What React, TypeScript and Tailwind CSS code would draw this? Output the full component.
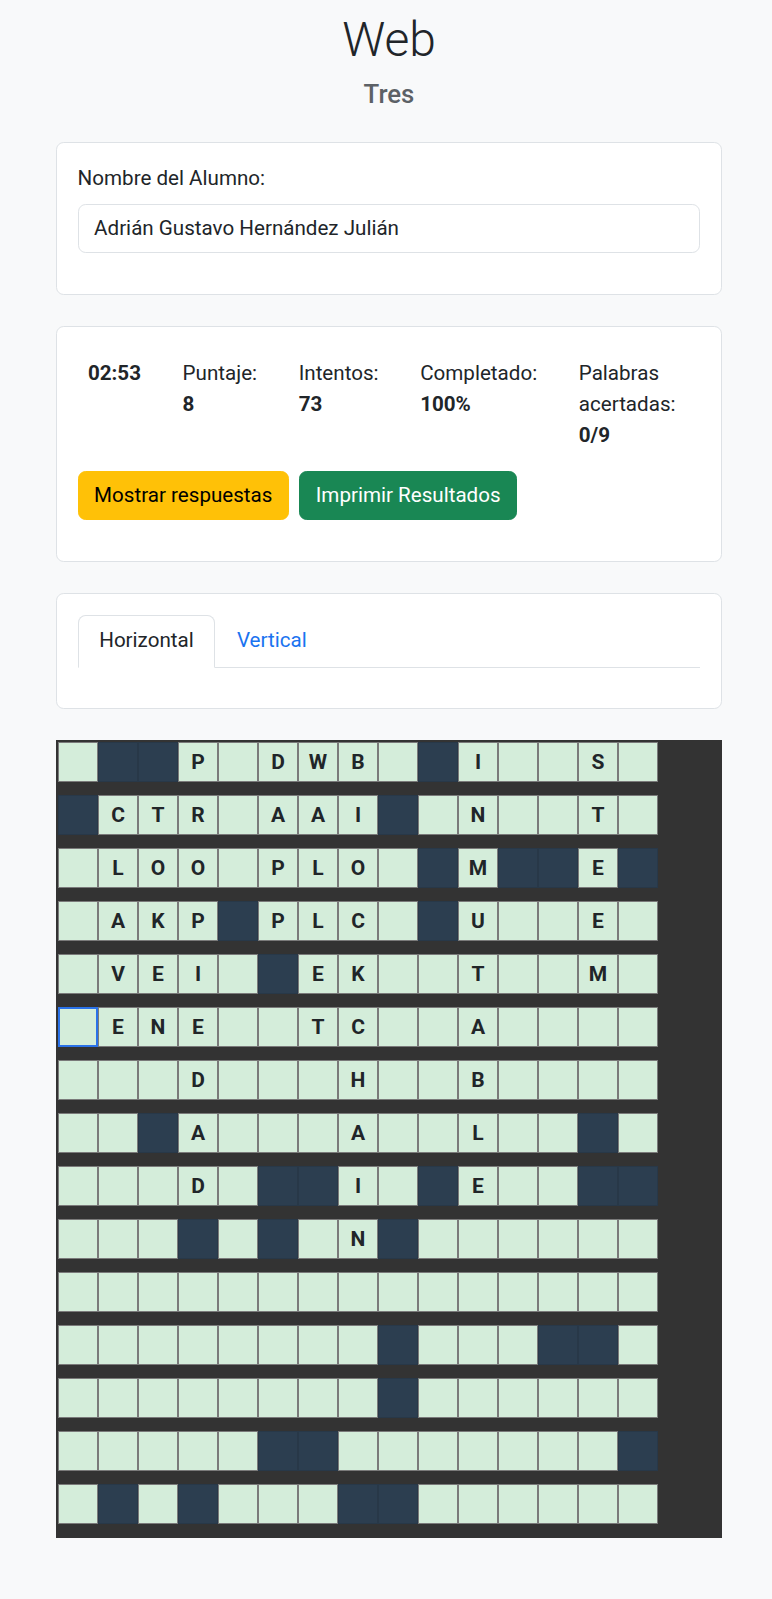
import React from "react";

// crossword layout: "." empty cell, "#" blocked, "*" focused cell, letters are filled in
const grid = [
  ".##P.DWB.#I..S.",
  "#CTR.AAI#.N..T.",
  ".LOO.PLO.#M##E#",
  ".AKP#PLC.#U..E.",
  ".VEI.#EK..T..M.",
  "*ENE..TC..A....",
  "...D...H..B....",
  "..#A...A..L..#.",
  "...D.##I.#E..##",
  "...#.#.N#......",
  "...............",
  "........#...##.",
  "........#......",
  ".....##.......#",
  ".#.#...##......",
];

const stats = [
  { label: "Puntaje:", value: "8" },
  { label: "Intentos:", value: "73" },
  { label: "Completado:", value: "100%" },
];

function Cell({ ch }: { ch: string }) {
  if (ch === "#") {
    return <div className="w-[40px] h-[40px] bg-[#2c3e50] border border-[#283848]" />;
  }
  if (ch === "*") {
    return <div className="w-[40px] h-[40px] bg-[#d4edda] border-2 border-[#2a72e8]" />;
  }
  return (
    <div className="w-[40px] h-[40px] bg-[#d4edda] border border-[#7a7a7a] flex items-center justify-center text-[21px] font-bold text-[#212529]">
      {ch === "." ? "" : ch}
    </div>
  );
}

export default function App() {
  return (
    <div className="min-h-screen bg-[#f8f9fa] font-['Roboto',sans-serif] text-[#212529] text-[20.6px] leading-[1.5]">
      <div className="pl-[56px] pr-[50px] pt-[11px] pb-[40px]">
        <h1 className="text-center text-[48px] font-light leading-[1.2] mb-[10px]">Web</h1>
        <h5 className="text-center text-[25.8px] font-medium leading-[1.2] text-[#5c6166] mb-[32px]">Tres</h5>

        {/* student name */}
        <div className="bg-white border border-[#dee2e6] rounded-[7.7px] p-[20.6px] mb-[31px]">
          <label className="block mb-[10.3px]">Nombre del Alumno:</label>
          <div className="h-[49px] border border-[#dee2e6] rounded-[7.7px] px-[15.5px] flex items-center mb-[20px]">
            Adrián Gustavo Hernández Julián
          </div>
        </div>

        {/* stats */}
        <div className="bg-white border border-[#dee2e6] rounded-[7.7px] p-[20.6px] mb-[31px]">
          <div className="flex gap-[21px] mb-[10.3px]">
            <div className="p-[10.3px] font-bold">02:53</div>
            {stats.map((s) => (
              <div key={s.label} className="p-[10.3px]">
                {s.label}
                <div className="font-bold">{s.value}</div>
              </div>
            ))}
            <div className="p-[10.3px]">
              Palabras
              <br />
              acertadas:
              <div className="font-bold">0/9</div>
            </div>
          </div>
          <div className="flex gap-[10.3px] mb-[20.6px]">
            <button className="h-[49px] px-[15.5px] rounded-[7.7px] bg-[#ffc107] border border-[#ffc107] text-black">
              Mostrar respuestas
            </button>
            <button className="h-[49px] px-[15.5px] rounded-[7.7px] bg-[#198754] border border-[#198754] text-white">
              Imprimir Resultados
            </button>
          </div>
        </div>

        {/* tabs */}
        <div className="bg-white border border-[#dee2e6] rounded-[7.7px] p-[20.6px] mb-[31px]">
          <div className="flex border-b border-[#dee2e6] mb-[20px]">
            <div className="px-[20.6px] py-[9.5px] border border-[#dee2e6] border-b-white rounded-t-[7.7px] -mb-px bg-white">
              Horizontal
            </div>
            <div className="px-[20.6px] py-[9.5px] border border-transparent text-[#1a73f0]">Vertical</div>
          </div>
        </div>

        {/* crossword */}
        <div className="bg-[#333333] pt-[2px] pl-[2px] pb-[1px]">
          {grid.map((row, r) => (
            <div key={r} className="flex mb-[13px]">
              {row.split("").map((ch, c) => (
                <Cell key={c} ch={ch} />
              ))}
            </div>
          ))}
        </div>
      </div>
    </div>
  );
}
